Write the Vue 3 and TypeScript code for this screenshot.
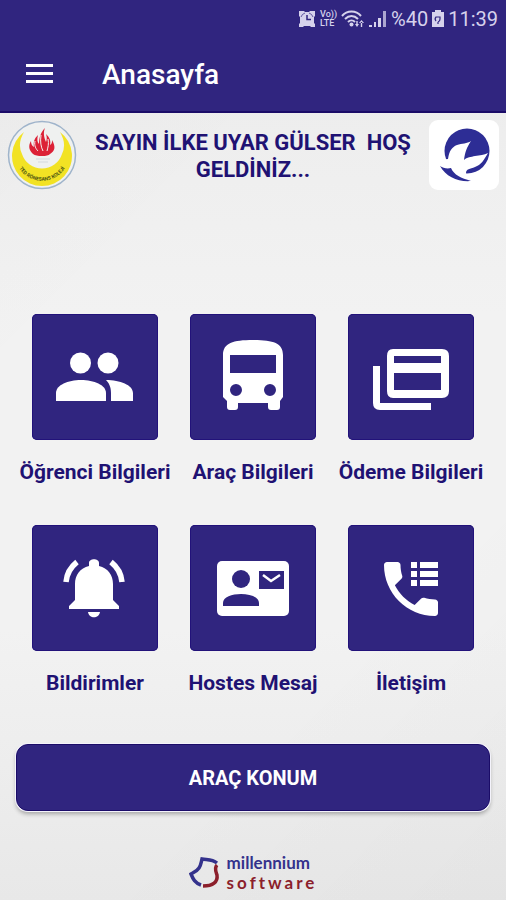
<script setup lang="ts">
type IconName = 'people' | 'bus' | 'card' | 'bell' | 'contact' | 'phone'

interface MenuItem {
  icon: IconName
  label: string
}

const items: MenuItem[] = [
  { icon: 'people', label: 'Öğrenci Bilgileri' },
  { icon: 'bus', label: 'Araç Bilgileri' },
  { icon: 'card', label: 'Ödeme Bilgileri' },
  { icon: 'bell', label: 'Bildirimler' },
  { icon: 'contact', label: 'Hostes Mesaj' },
  { icon: 'phone', label: 'İletişim' },
]

const userName = 'İLKE UYAR GÜLSER'
</script>

<template>
  <div class="screen">
    <header class="top">
      <div class="status">
        <svg class="status-icon" width="18" height="20" viewBox="0 0 18 20" aria-hidden="true">
          <path d="M1 2h5l1 1h4l1-1h5v5l-1 1v6l1 1v3h-4l-1-1H6l-1 1H1v-3l1-1V8L1 7z" fill="currentColor" />
          <path d="M9 6v4.500h4" fill="none" stroke="#30257f" stroke-width="1.500" />
          <path d="M3 8a6 6 0 0 1 4-4M15 8a6 6 0 0 0-4-4" fill="none" stroke="#30257f" stroke-width=".7" />
        </svg>
        <span class="volte"><span>Vo))</span><span>LTE</span></span>
        <svg class="status-icon" width="24" height="20" viewBox="0 0 24 20" aria-hidden="true">
          <g fill="none" stroke="currentColor" stroke-width="2">
            <path d="M1 7c5-6 14-6 19 0M4 10c4-4 9-4 13 0M7 13c2-2 5-2 7 0" />
          </g>
          <circle cx="10.500" cy="15.500" r="2" fill="currentColor" />
          <path d="M14 15h4l-2 3zM18 14h5l-2.500-3zM15.300 12h1.400v4h-1.400zM19.800 13h1.400v5h-1.400z" fill="currentColor" />
        </svg>
        <svg class="status-icon" width="18" height="20" viewBox="0 0 18 20" aria-hidden="true">
          <path d="M0 16h3v2H0zM5 13h2v5H5zM9 9h3v9H9z" fill="currentColor" />
          <path d="M14 2h3v16h-3z" fill="currentColor" opacity=".75" />
        </svg>
        <span>%40</span>
        <svg class="status-icon" width="12" height="20" viewBox="0 0 12 20" aria-hidden="true">
          <path d="M3 1h6v2h3v15H0V3h3z" fill="currentColor" />
          <path d="M4 12a3 3 0 0 1 0-4h4v2a3 3 0 0 1-2 3M6 13v2" fill="none" stroke="#30257f" stroke-width="1.200" />
        </svg>
        <span>11:39</span>
      </div>
      <div class="appbar">
        <button class="menu" type="button" aria-label="Menü">
          <svg width="28" height="20" viewBox="0 0 28 20" aria-hidden="true">
            <path d="M0 0h27v3H0zM0 8h27v3H0zM0 16h27v3H0z" fill="currentColor" />
          </svg>
        </button>
        <h1>Anasayfa</h1>
      </div>
    </header>

    <main>
      <section class="welcome">
        <svg class="logo" viewBox="0 0 70 70" role="img" aria-label="TED Rönesans Koleji">
          <circle cx="35" cy="35" r="33.500" fill="#eff1f0" stroke="#9fb4cb" stroke-width="1.500" />
          <path d="M17 12A30 30 0 1 0 53 12Q60 24 55 34A21 21 0 0 1 15 34Q10 24 17 12z" fill="#f2e224" />
          <path d="M26 34c-4-4-5-8-2-13 0 3 1 5 3 6-1-6 1-9 4-12-1 4-1 7 1 9 0-7 2-12 6-16-2 5-1 9 1 14 1-3 1-5 0-8 4 4 5 7 4 11 2-1 2-3 2-5 4 7 3 11-2 14q-2 2-8 2t-9-2z" fill="#dc2136" />
          <path d="M28 21c-1 5 1 8 3 10M34 15c-1 7 0 12 2 16M41 19c1 5 0 8-1 12" fill="none" stroke="#f3f4f2" stroke-width="1" />
          <path d="M29 39h14M31 42h10" stroke="#dde1e4" stroke-width="1.500" />
          <path id="crest-arc" d="M10 44A27 27 0 0 0 60 44" fill="none" />
          <text class="crest-text"><textPath href="#crest-arc" startOffset="50%" text-anchor="middle">TED RÖNESANS KOLEJİ</textPath></text>
        </svg>
        <p>SAYIN {{ userName }}&nbsp; HOŞ GELDİNİZ...</p>
        <svg class="logo" viewBox="0 0 70 70" aria-hidden="true">
          <rect width="70" height="70" rx="9" fill="#fff" />
          <circle cx="38" cy="31" r="22.500" fill="#2d2d95" />
          <path d="M8 40l11-1c1-8 4-12 9-14s10-1 14-4c-4 6-6 11-7 19 3-3 7-3 11-4 5-1 9-1 13-3-4 7-7 12-13 14-5 2-9 2-9 6 0 3 3 4 7 4v6H25L10 50z" fill="#fff" />
          <path d="M11 46c3 2 7 3 11 2 3 7 10 10 20 13-13 1-25-4-31-15z" fill="#2d2d95" />
        </svg>
      </section>

      <nav class="grid" aria-label="Ana menü">
        <a v-for="item in items" :key="item.icon" class="item" href="#">
          <span class="tile">
            <svg viewBox="0 0 126 126" fill="#fff" aria-hidden="true">
              <template v-if="item.icon === 'people'">
                <circle cx="48.500" cy="49" r="10.500" />
                <circle cx="76" cy="49" r="10.500" />
                <path d="M24 87v-8c0-8 12-13 25-13s25 5 25 13v8z" />
                <path d="M74 66c14 0 27 5 27 13v8H79v-8c0-6-2-10-5-13z" />
              </template>
              <path
                v-else-if="item.icon === 'bus'"
                fill-rule="evenodd"
                d="M33 41c0-12 10-15 30-15s30 3 30 15v42l-3 4v6q0 3-3 3h-6q-3 0-3-3v-4H48v4q0 3-3 3h-5q-3 0-3-3v-6l-4-4zM40 41v18h46V41zM52 76a6 6 0 1 0-12 0 6 6 0 0 0 12 0zM86 76a6 6 0 1 0-12 0 6 6 0 0 0 12 0z"
              />
              <path
                v-else-if="item.icon === 'card'"
                fill-rule="evenodd"
                d="M45 35h49q7 0 7 7v35q0 7-7 7H45q-6 0-6-7V42q0-7 6-7zM46 42v7h47v-7zM46 59v17h47V59zM25 52h7v37h51v7H32q-7 0-7-7z"
              />
              <template v-else-if="item.icon === 'bell'">
                <path d="M57 41v-3c0-5 10-5 10 0v3c9 2 14 9 14 18v16l6 6v3H37v-3l6-6V59c0-9 5-16 14-18zM56 87h12c-1 7-11 7-12 0z" />
                <path d="M45 37Q35 45 34 57M79 37q10 8 11 20" fill="none" stroke="#fff" stroke-width="5.500" />
              </template>
              <template v-else-if="item.icon === 'contact'">
                <rect x="27" y="36" width="72" height="55" rx="5" />
                <circle cx="51" cy="54" r="9" fill="#30257f" />
                <path d="M33 81v-3c0-6 9-9 18-9s18 3 18 9v3zM69 46h25v18H69z" fill="#30257f" />
                <path d="M73 50l8 6 9-6" fill="none" stroke="#fff" stroke-width="2.500" />
              </template>
              <template v-else>
                <path
                  transform="translate(27 28) scale(3)"
                  d="M20 15.500c-1.250 0-2.450-.2-3.570-.57-.35-.11-.74-.03-1.020.24l-2.200 2.200c-2.830-1.440-5.150-3.750-6.590-6.590l2.200-2.210c.28-.26.36-.65.25-1C8.700 6.450 8.500 5.250 8.500 4c0-.55-.45-1-1-1H4c-.55 0-1 .45-1 1 0 9.390 7.610 17 17 17 .55 0 1-.45 1-1v-3.500c0-.55-.45-1-1-1z"
                />
                <path d="M63 37h6v6h-6zM72 37h18v6H72zM63 46h6v6h-6zM72 46h18v6H72zM63 55h6v6h-6zM72 55h18v6H72z" />
              </template>
            </svg>
          </span>
          <span class="label">{{ item.label }}</span>
        </a>
      </nav>

      <button class="locate" type="button">ARAÇ KONUM</button>
    </main>

    <footer class="brand">
      <svg width="32" height="34" viewBox="0 0 32 34" fill="none" stroke-width="3.500" aria-hidden="true">
        <path d="M28 7C23 3 18 4 13 3c-1 4-1 6-3 9-2 3-5 4-8 6 2 5 4 9 10 11" stroke="#34328c" />
        <path d="M28 9c-3 3-1 7 0 10 1 7-4 11-14 11" stroke="#8c1f2b" />
      </svg>
      <span class="brand-name"><span>millennium</span><span class="brand-sub">software</span></span>
    </footer>
  </div>
</template>

<style>
body {
  margin: 0;
}
</style>

<style scoped>
.screen {
  display: flex;
  flex-direction: column;
  min-height: 100vh;
  box-sizing: border-box;
  font-family: Roboto, "Liberation Sans", sans-serif;
  background:
    linear-gradient(135deg, rgba(0, 0, 0, 0.01), transparent 30%, transparent 70%, rgba(0, 0, 0, 0.02)),
    linear-gradient(#ebebeb, #f2f2f2 35%, #f2f2f2 70%, #e8e8e8);
}

.top {
  background: #30257f;
  border-bottom: 2px solid #1b0c68;
  color: #fff;
}

.status {
  display: flex;
  align-items: center;
  justify-content: flex-end;
  gap: 4px;
  height: 37px;
  padding-right: 8px;
  font-size: 20px;
  color: #d6d2ec;
}

.status-icon {
  flex: none;
}

.volte {
  display: flex;
  flex-direction: column;
  font-size: 9px;
  font-weight: 500;
  line-height: 9px;
}

.appbar {
  display: flex;
  align-items: center;
  gap: 48px;
  height: 74px;
  padding-left: 26px;
}

.menu {
  display: flex;
  padding: 0;
  border: 0;
  background: none;
  color: #fff;
}

h1 {
  margin: 0;
  font-size: 28px;
  font-weight: 500;
}

.welcome {
  display: flex;
  justify-content: space-between;
  gap: 12px;
  padding: 7px 7px 0;
}

.logo {
  flex: none;
  width: 70px;
  height: 70px;
}

.crest-text {
  font-size: 5px;
  font-weight: 700;
  fill: #4d5412;
}

.welcome p {
  margin: 0;
  padding-top: 9px;
  font-size: 22px;
  font-weight: 700;
  line-height: 27px;
  text-align: center;
  color: #1f1273;
}

.grid {
  display: grid;
  grid-template-columns: repeat(3, 1fr);
  row-gap: 37px;
  padding: 124px 16px 0;
}

.item {
  display: flex;
  flex-direction: column;
  align-items: center;
  gap: 16px;
  color: #1f1273;
  text-decoration: none;
}

.tile {
  display: flex;
  width: 126px;
  height: 126px;
  border-radius: 5px;
  background: #30257f;
  box-shadow: inset 0 0 0 1px #22127a;
}

.tile svg {
  width: 100%;
  height: 100%;
}

.label {
  font-size: 21px;
  font-weight: 700;
  line-height: 32px;
  white-space: nowrap;
}

.locate {
  display: block;
  width: calc(100% - 32px);
  height: 67px;
  margin: 45px 16px 0;
  border: 1px solid #1b0c68;
  border-radius: 12px;
  background: #30257f;
  box-shadow: 0 0 0 1px #f4f3fb, 0 3px 4px rgba(0, 0, 0, 0.3);
  font-family: inherit;
  font-size: 20px;
  font-weight: 700;
  color: #fff;
}

.brand {
  display: flex;
  align-items: center;
  justify-content: center;
  gap: 6px;
  margin-top: auto;
  padding: 16px 0 7px;
}

.brand-name {
  display: flex;
  flex-direction: column;
  font-family: Lato, "Liberation Sans", sans-serif;
  font-size: 17px;
  font-weight: 700;
  line-height: 20px;
  color: #34328c;
}

.brand-sub {
  letter-spacing: 3px;
  color: #8c1f2b;
}
</style>
